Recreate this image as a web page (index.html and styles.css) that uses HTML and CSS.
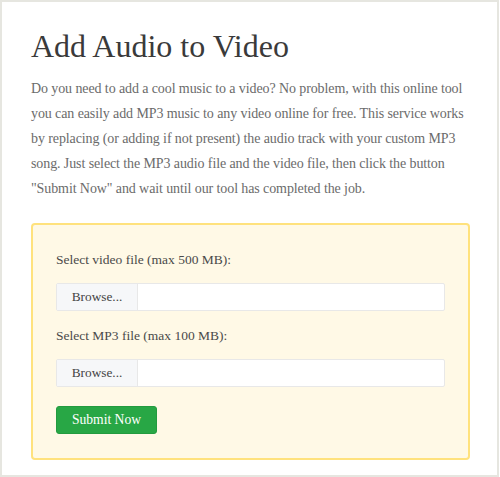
FILE: index.html
```html
<!DOCTYPE html>
<html>
<head>
<meta charset="utf-8">
<link rel="stylesheet" href="styles.css">
</head>
<body>
<div class="frame">
  <h1 class="title">Add Audio to Video</h1>
  <p class="intro">Do you need to add a cool music to a video? No problem, with this online tool you can easily add MP3 music to any video online for free. This service works by replacing (or adding if not present) the audio track with your custom MP3 song. Just select the MP3 audio file and the video file, then click the button "Submit Now" and wait until our tool has completed the job.</p>
  <form class="box">
    <div class="label">Select video file (max 500 MB):</div>
    <div class="file"><span class="browse">Browse...</span><span class="name"></span></div>
    <div class="label">Select MP3 file (max 100 MB):</div>
    <div class="file"><span class="browse">Browse...</span><span class="name"></span></div>
    <button type="button" class="submit">Submit Now</button>
  </form>
</div>
</body>
</html>
```
FILE: styles.css
```css
html, body {
  margin: 0;
  padding: 0;
  background: #fff;
}
.frame {
  box-sizing: border-box;
  width: 499px;
  height: 477px;
  border: 2px solid #e6e6e0;
  padding: 0 27px 0 29px;
  font-family: "Liberation Serif", serif;
  overflow: hidden;
}
.title {
  margin: 24px 0 0;
  font-size: 32px;
  font-weight: normal;
  line-height: 40px;
  color: #3a3a3a;
}
.intro {
  margin: 10px 0 0;
  font-size: 14px;
  letter-spacing: -0.1px;
  line-height: 25px;
  color: #6b6b6b;
}
.box {
  box-sizing: border-box;
  margin: 22px 0 0;
  width: 439px;
  height: 237px;
  border: 2px solid #ffe27d;
  border-radius: 4px;
  background: #fff9e6;
  padding: 26px 23px 0 23px;
}
.label {
  font-size: 13.5px;
  line-height: 18px;
  color: #4a4a4a;
  margin-bottom: 14px;
}
.file {
  display: flex;
  height: 28px;
  box-sizing: border-box;
  border: 1px solid #e8e8e8;
  border-radius: 2px;
  background: #fff;
  margin-bottom: 16px;
}
.browse {
  width: 81px;
  box-sizing: border-box;
  background: #f6f7f9;
  border-right: 1px solid #e8e8e8;
  text-align: center;
  font-size: 13.3px;
  line-height: 26px;
  color: #444;
}
.name { flex: 1; }
.submit {
  display: block;
  width: 101px;
  height: 28px;
  border: 1px solid #239b3f;
  border-radius: 3px;
  background: #28a745;
  color: #fff;
  font-family: "Liberation Serif", serif;
  font-size: 13.6px;
  padding: 0;
  margin-top: 19px;
}
```
